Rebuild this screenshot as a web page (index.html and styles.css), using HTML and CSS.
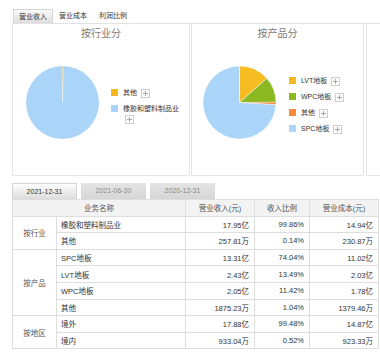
FILE: index.html
```html
<!DOCTYPE html>
<html lang="zh">
<head>
    <meta charset="UTF-8">
    <title>主营构成</title>
    <link rel="stylesheet" href="styles.css">
</head>
<body>
<div class="wrap">
    <div class="tabs">
        <span class="tab active">营业收入</span>
        <span class="tab">营业成本</span>
        <span class="tab">利润比例</span>
    </div>

    <div class="charts">
        <div class="panel p1">
            <div class="ptitle">按行业分</div>
            <div class="pbody">
                <svg class="pie" width="73" height="73" viewBox="0 0 73 73">
                    <circle cx="36.5" cy="36.5" r="36.5" fill="#abd5f8"/>
                    <path d="M36.5 36.5 L36.5 0 A36.5 36.5 0 0 1 37.3 0.01 Z" fill="#f6b81f" stroke="#fff" stroke-width="0.4"/>
                </svg>
                <div class="legend">
                    <div class="litem"><i class="sw yellow"></i><span class="lbl"><span class="t">其他</span> <i class="plus"></i></span></div>
                    <div class="litem"><i class="sw blue"></i><span class="lbl"><span class="t">橡胶和塑料制品业</span> <i class="plus"></i></span></div>
                </div>
            </div>
        </div>

        <div class="panel p2">
            <div class="ptitle">按产品分</div>
            <div class="pbody">
                <svg class="pie" width="73" height="73" viewBox="0 0 73 73">
                    <path d="M36.5 36.5 L36.5 0 A36.5 36.5 0 0 1 63.86 12.35 Z" fill="#f6bc22" stroke="#fff" stroke-width="0.5"/>
                    <path d="M36.5 36.5 L63.86 12.35 A36.5 36.5 0 0 1 73 36.29 Z" fill="#8cb822" stroke="#fff" stroke-width="0.5"/>
                    <path d="M36.5 36.5 L73 36.29 A36.5 36.5 0 0 1 72.94 38.68 Z" fill="#f98b3c" stroke="#fff" stroke-width="0.3"/>
                    <path d="M36.5 36.5 L72.94 38.68 A36.5 36.5 0 1 1 36.5 0 Z" fill="#abd5f8" stroke="#fff" stroke-width="0.5"/>
                </svg>
                <div class="legend">
                    <div class="litem"><i class="sw yellow"></i><span class="lbl"><span class="t">LVT地板</span> <i class="plus"></i></span></div>
                    <div class="litem"><i class="sw green"></i><span class="lbl"><span class="t">WPC地板</span> <i class="plus"></i></span></div>
                    <div class="litem"><i class="sw orange"></i><span class="lbl"><span class="t">其他</span> <i class="plus"></i></span></div>
                    <div class="litem"><i class="sw blue"></i><span class="lbl"><span class="t">SPC地板</span> <i class="plus"></i></span></div>
                </div>
            </div>
        </div>

        <div class="panel p3"></div>
    </div>

    <div class="dates">
        <span class="date active">2021-12-31</span>
        <span class="date">2021-06-30</span>
        <span class="date">2020-12-31</span>
    </div>

    <table class="data">
        <colgroup>
            <col style="width:44px">
            <col style="width:129px">
            <col style="width:69px">
            <col style="width:55px">
            <col style="width:69px">
        </colgroup>
        <thead>
            <tr>
                <th colspan="2">业务名称</th>
                <th>营业收入(元)</th>
                <th>收入比例</th>
                <th>营业成本(元)</th>
            </tr>
        </thead>
        <tbody>
            <tr>
                <td class="grp" rowspan="2">按行业</td>
                <td class="name">橡胶和塑料制品业</td>
                <td class="num">17.95亿</td>
                <td class="num">99.86%</td>
                <td class="num">14.94亿</td>
            </tr>
            <tr>
                <td class="name">其他</td>
                <td class="num">257.81万</td>
                <td class="num">0.14%</td>
                <td class="num">230.87万</td>
            </tr>
            <tr>
                <td class="grp" rowspan="4">按产品</td>
                <td class="name">SPC地板</td>
                <td class="num">13.31亿</td>
                <td class="num">74.04%</td>
                <td class="num">11.02亿</td>
            </tr>
            <tr>
                <td class="name">LVT地板</td>
                <td class="num">2.43亿</td>
                <td class="num">13.49%</td>
                <td class="num">2.03亿</td>
            </tr>
            <tr>
                <td class="name">WPC地板</td>
                <td class="num">2.05亿</td>
                <td class="num">11.42%</td>
                <td class="num">1.78亿</td>
            </tr>
            <tr>
                <td class="name">其他</td>
                <td class="num">1875.23万</td>
                <td class="num">1.04%</td>
                <td class="num">1379.46万</td>
            </tr>
            <tr>
                <td class="grp" rowspan="2">按地区</td>
                <td class="name">境外</td>
                <td class="num">17.88亿</td>
                <td class="num">99.48%</td>
                <td class="num">14.87亿</td>
            </tr>
            <tr>
                <td class="name">境内</td>
                <td class="num">933.04万</td>
                <td class="num">0.52%</td>
                <td class="num">923.33万</td>
            </tr>
        </tbody>
    </table>
</div>
</body>
</html>
```

FILE: styles.css
```css
body {
    margin: 0;
    background: #fff;
    color: #333;
    font-family: "Liberation Sans", "Noto Sans CJK SC", sans-serif;
    overflow: hidden;
}

.wrap {
    width: 368px;
    padding-left: 12px;
}

/* top tabs */
.tabs {
    display: flex;
    height: 14px;
    padding: 9px 0 0 1px;
}

.tab {
    width: 40px;
    height: 14px;
    line-height: 14px;
    text-align: center;
    font-size: 7px;
    color: #333;
    box-sizing: border-box;
}

.tab.active {
    border: 1px solid #d6d6d6;
    border-bottom: none;
    line-height: 13px;
    background: linear-gradient(#fafafa, #dedede);
}

/* chart panels */
.charts {
    display: flex;
    border-top: 1px solid #e3e3e3;
    overflow: hidden;
}

.panel {
    box-sizing: border-box;
    height: 152px;
    border: 1px solid #e6e6e6;
    border-top: none;
}

.p1 { width: 178px; flex: none; }
.p2 { width: 173px; flex: none; margin-left: 1px; }
.p3 { flex: 1; margin-left: 2px; border-right: none; }

.ptitle {
    padding-top: 3px;
    line-height: 13px;
    font-size: 10px;
    color: #7a7a7a;
    text-align: center;
}

.pbody {
    display: flex;
    align-items: flex-start;
    margin-top: 26px;
}

.p1 .pbody { padding-left: 13px; }
.p2 .pbody { padding-left: 11px; }

.pie {
    flex: none;
    display: block;
}

.legend {
    min-width: 0;
    flex: 1;
}

.p1 .legend { margin: 22px 0 0 12px; }
.p2 .legend { margin: 10px 0 0 13px; }

.litem {
    display: flex;
    align-items: flex-start;
    font-size: 7px;
    line-height: 10px;
    margin-bottom: 6px;
}

.sw {
    flex: none;
    width: 7px;
    height: 7px;
    margin: 1px 5px 0 0;
}

.yellow { background: #f6b81f; }
.green { background: #8cb822; }
.orange { background: #f98b3c; }
.blue { background: #abd5f8; }

.lbl {
    min-width: 0;
}

.lbl .t {
    white-space: nowrap;
}

.plus {
    display: inline-block;
    width: 9px;
    height: 9px;
    margin-left: 2px;
    box-sizing: border-box;
    border: 1px solid #cfcfcf;
    vertical-align: middle;
    background:
        linear-gradient(#a8a8a8, #a8a8a8) center / 5px 1px no-repeat,
        linear-gradient(#a8a8a8, #a8a8a8) center / 1px 5px no-repeat,
        #fff;
}

/* report dates */
.dates {
    display: flex;
    gap: 4px;
    margin-top: 7px;
}

.date {
    width: 65px;
    height: 16px;
    line-height: 16px;
    text-align: center;
    font-size: 7px;
    color: #8a8a8a;
    background: linear-gradient(#e4e4e4, #d6d6d6);
}

.date.active {
    box-sizing: border-box;
    border: 1px solid #d4d4d4;
    border-bottom: none;
    line-height: 15px;
    color: #333;
    background: linear-gradient(#fdfdfd, #dcdcdc);
}

/* data table */
.data {
    width: 366px;
    table-layout: fixed;
    border-collapse: collapse;
    font-size: 7.5px;
}

.data th,
.data td {
    border: 1px solid #dedede;
    padding: 0 5px;
    white-space: nowrap;
}

.data tr {
    height: 16.6px;
}

.data th {
    background: #f3f3f3;
    color: #555;
    font-weight: normal;
    text-align: center;
}

.data .grp {
    text-align: center;
    color: #555;
}

.data .name {
    padding-left: 4px;
    text-align: left;
}

.data .num {
    text-align: right;
}
```
